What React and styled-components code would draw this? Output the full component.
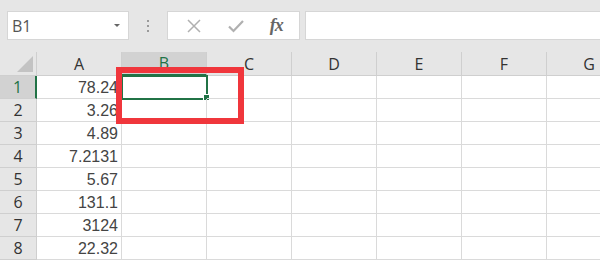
import React from 'react';
import styled, { createGlobalStyle } from 'styled-components';

const GlobalStyle = createGlobalStyle`
  html, body {
    margin: 0;
    padding: 0;
    background: #ffffff;
    overflow: hidden;
  }
`;

const columns = ['A', 'B', 'C', 'D', 'E', 'F', 'G'];
const values = ['78.24', '3.26', '4.89', '7.2131', '5.67', '131.1', '3124', '22.32'];

function App() {
  return (
    <Wrapper>
      <GlobalStyle />
      <Toolbar>
        <NameBox>
          <span>B1</span>
          <Caret />
        </NameBox>
        <Dots>
          <i /><i /><i />
        </Dots>
        <FxBox>
          <svg width="16" height="16" viewBox="0 0 16 16">
            <path d="M2 2 L14 14 M14 2 L2 14" stroke="#b0b0b0" strokeWidth="1.5" fill="none" />
          </svg>
          <svg width="18" height="16" viewBox="0 0 18 16">
            <path d="M2 8.5 L6.5 13 L16 3" stroke="#b0b0b0" strokeWidth="2.2" fill="none" />
          </svg>
          <FxText>fx</FxText>
        </FxBox>
        <FormulaInput />
      </Toolbar>
      <Sheet>
        <Grid>
          <Corner>
            <svg width="16" height="16" viewBox="0 0 16 16">
              <path d="M16 0 L16 16 L0 16 Z" fill="#c3c3c3" />
            </svg>
          </Corner>
          {columns.map((c) => (
            <ColHeader key={c} $active={c === 'B'}>{c}</ColHeader>
          ))}
          {values.map((v, i) => (
            <React.Fragment key={v}>
              <RowHeader $active={i === 0}>{i + 1}</RowHeader>
              <Cell>{v}</Cell>
              {columns.slice(1).map((c) => (
                <Cell key={c} $selected={i === 0 && c === 'B'} />
              ))}
            </React.Fragment>
          ))}
        </Grid>
        <Highlight />
      </Sheet>
    </Wrapper>
  );
}

const Wrapper = styled.div`
  width: 600px;
  height: 260px;
  overflow: hidden;
  background: #e6e6e6;
  font-family: "Liberation Sans", Arial, sans-serif;
`;

const Toolbar = styled.div`
  display: flex;
  align-items: center;
  height: 52px;
  padding-left: 7px;
  padding-bottom: 1px;
  box-sizing: border-box;
`;

const NameBox = styled.div`
  display: flex;
  align-items: center;
  justify-content: space-between;
  width: 122px;
  height: 29px;
  box-sizing: border-box;
  padding: 0 8px 0 4px;
  background: #ffffff;
  border: 1px solid #d6d6d6;
  color: #555;
  font-family: "Open Sans", "Liberation Sans", sans-serif;
  font-size: 16px;
`;

const Caret = styled.span`
  width: 0;
  height: 0;
  border-left: 3px solid transparent;
  border-right: 3px solid transparent;
  border-top: 3px solid #666;
`;

const Dots = styled.div`
  display: flex;
  flex-direction: column;
  gap: 3px;
  width: 38px;
  align-items: center;

  i {
    width: 2px;
    height: 2px;
    background: #9a9a9a;
    display: block;
  }
`;

const FxBox = styled.div`
  display: flex;
  align-items: center;
  justify-content: space-around;
  width: 133px;
  height: 29px;
  box-sizing: border-box;
  padding: 0 4px 0 6px;
  background: #ffffff;
  border: 1px solid #d6d6d6;
`;

const FxText = styled.span`
  font-family: "Liberation Serif", "Times New Roman", serif;
  font-style: italic;
  font-weight: bold;
  font-size: 18px;
  color: #666;
  letter-spacing: -1px;
`;

const FormulaInput = styled.div`
  flex: 1;
  height: 29px;
  margin-left: 5px;
  background: #ffffff;
  border: 1px solid #d6d6d6;
  border-right: none;
  box-sizing: border-box;
`;

const Sheet = styled.div`
  position: relative;
`;

const Grid = styled.div`
  display: grid;
  grid-template-columns: 37px repeat(7, 85px);
  grid-template-rows: 24px repeat(8, 23px);
  background: #ffffff;
`;

const Corner = styled.div`
  background: #e6e6e6;
  border-right: 1px solid #cfcfcf;
  border-bottom: 1px solid #cfcfcf;
  display: flex;
  align-items: flex-end;
  justify-content: flex-end;
  padding: 0 3px 3px 0;
  box-sizing: border-box;
`;

const ColHeader = styled.div`
  background: ${(p) => (p.$active ? '#d2d2d2' : '#e6e6e6')};
  color: ${(p) => (p.$active ? '#217346' : '#333')};
  border-right: 1px solid #cfcfcf;
  border-bottom: ${(p) => (p.$active ? '2px solid #217346' : '1px solid #cfcfcf')};
  box-sizing: border-box;
  display: flex;
  align-items: center;
  justify-content: center;
  font-family: "Open Sans", "Liberation Sans", sans-serif;
  font-size: 16px;
`;

const RowHeader = styled.div`
  background: ${(p) => (p.$active ? '#d2d2d2' : '#e6e6e6')};
  color: ${(p) => (p.$active ? '#217346' : '#333')};
  border-right: ${(p) => (p.$active ? '2px solid #217346' : '1px solid #cfcfcf')};
  border-bottom: 1px solid #cfcfcf;
  box-sizing: border-box;
  display: flex;
  align-items: center;
  justify-content: center;
  font-family: "Open Sans", "Liberation Sans", sans-serif;
  font-size: 16px;
`;

const Cell = styled.div`
  position: relative;
  border-right: 1px solid #dadada;
  border-bottom: 1px solid #dadada;
  box-sizing: border-box;
  display: flex;
  align-items: flex-end;
  justify-content: flex-end;
  padding: 0 3px 0 0;
  color: #444;
  font-size: 16px;
  line-height: 21px;
  ${(p) => p.$selected && `
    outline: 2px solid #217346;
    outline-offset: -1px;
    &::after {
      content: '';
      position: absolute;
      right: -4px;
      bottom: -3px;
      width: 5px;
      height: 5px;
      background: #217346;
      border: 1px solid #fff;
    }
  `}
`;

const Highlight = styled.div`
  position: absolute;
  left: 116px;
  top: 15px;
  width: 128px;
  height: 57px;
  box-sizing: border-box;
  border: 6px solid #f0363c;
  pointer-events: none;
`;

export default App;
